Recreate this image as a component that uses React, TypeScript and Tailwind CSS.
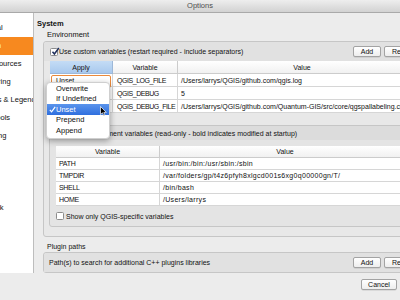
import React from "react";

const sidebarItems = [
  "General",
  "System",
  "Data Sources",
  "Rendering",
  "Canvas & Legend",
  "Map Tools",
  "Digitizing",
  "GDAL",
  "CRS",
  "Locale",
  "Network",
];

const customVars = [
  { apply: "Unset", name: "QGIS_LOG_FILE", value: "/Users/larrys/QGIS/github.com/qgis.log" },
  { apply: "Overwrite", name: "QGIS_DEBUG", value: "5" },
  {
    apply: "Overwrite",
    name: "QGIS_DEBUG_FILE",
    value: "/Users/larrys/QGIS/github.com/Quantum-GIS/src/core/qgspallabeling.cpp",
  },
];

const systemVars = [
  ["PATH", "/usr/bin:/bin:/usr/sbin:/sbin"],
  ["TMPDIR", "/var/folders/gp/t4z6pfyh8xlgcd001s6xg0q00000gn/T/"],
  ["SHELL", "/bin/bash"],
  ["HOME", "/Users/larrys"],
];

const applyOptions = ["Overwrite", "If Undefined", "Unset", "Prepend", "Append"];

const CheckBox = ({ checked }: { checked?: boolean }) => (
  <div className="relative w-[8px] h-[8px] shrink-0 bg-white border border-[#8c8c8c] rounded-[1.5px]">
    {checked && (
      <svg className="absolute left-[0px] top-[-2px]" width="9" height="9" viewBox="0 0 9 9">
        <path d="M1.5 4.8 L3.4 7 L7.8 1" fill="none" stroke="#1f2f5c" strokeWidth="1.5" />
      </svg>
    )}
  </div>
);

const MacButton = ({ label, w }: { label: string; w: string }) => (
  <div
    className={`${w} h-[11px] shrink-0 flex items-center justify-center overflow-hidden whitespace-nowrap bg-gradient-to-b from-white to-[#eeeeee] border border-[#a3a3a3] rounded-[2px] text-[7px] text-[#111] shadow-[0_0.5px_0.5px_rgba(0,0,0,0.15)]`}
  >
    {label}
  </div>
);

export default function App() {
  return (
    <div className="relative w-[400px] h-[300px] overflow-hidden bg-[#ececec] font-['Liberation_Sans',Arial,sans-serif] text-[7px] text-[#111] leading-none">
      {/* title bar */}
      <div className="h-[13px] flex items-center justify-center bg-gradient-to-b from-[#eeeeee] to-[#d2d2d2] border-b border-[#a9a9a9] text-[7.5px] text-[#4d4d4d]">
        Options
      </div>

      <div className="flex h-[260px]">
        {/* sidebar list, scrolled horizontally */}
        <div className="w-[34px] shrink-0 bg-white border-r border-[#bdbdbd] overflow-hidden pt-[6px] text-[7.5px]">
          {sidebarItems.map((item) => (
            <div
              key={item}
              className={`h-[18px] flex items-center whitespace-nowrap ${
                item === "System" ? "bg-[#f7891f] text-white" : "text-[#111]"
              }`}
            >
              <span className="ml-[-24px]">{item}</span>
            </div>
          ))}
        </div>

        {/* page */}
        <div className="flex-1 overflow-hidden pt-[6px]">
          <div className="h-[10px] flex items-center pl-[3px] font-bold text-[7.5px]">System</div>
          <div className="h-[12px] flex items-center pl-[13px] text-[7.5px]">Environment</div>

          <div className="ml-[9px] w-[389px] border border-[#c6c6c6] rounded-[3px] bg-[#e8e8e8]">
            <div className="h-[19px] flex items-center pl-[6px] pr-[5px] bg-[#e1e1e1] rounded-t-[3px]">
              <CheckBox checked />
              <span className="ml-[1px] whitespace-nowrap">
                Use custom variables (restart required - include separators)
              </span>
              <div className="ml-auto flex gap-[3px]">
                <MacButton label="Add" w="w-[28px]" />
                <MacButton label="Remove" w="w-[42px]" />
              </div>
            </div>

            <div className="pl-[5px] pr-[5px] pb-[9px]">
              {/* custom variables table */}
              <div className="ml-[1px] bg-white">
                <div className="grid grid-cols-[63px_65px_1fr] h-[13px]">
                  <div className="flex items-center justify-center bg-gradient-to-b from-[#c4dcf5] to-[#a9c9ee] border-r border-b border-[#9db8d8]">
                    Apply
                  </div>
                  <div className="flex items-center justify-center bg-gradient-to-b from-white to-[#f1f1f1] border-r border-b border-[#cccccc]">
                    Variable
                  </div>
                  <div className="flex items-center justify-center bg-gradient-to-b from-white to-[#f1f1f1] border-b border-[#cccccc]">
                    Value
                  </div>
                </div>
                {customVars.map((v, i) => (
                  <div key={v.name} className="grid grid-cols-[63px_65px_1fr] h-[13px]">
                    <div className="relative border-r border-b border-[#d6d6d6]">
                      {i === 0 ? (
                        <div className="absolute left-[1px] top-[1px] w-[60px] h-[13px] bg-white border-[1.5px] border-[#eb8a3c] rounded-[2px] pl-[4px] pt-[1px]">
                          {v.apply}
                        </div>
                      ) : (
                        <div className="h-full flex items-center pl-[4px]">{v.apply}</div>
                      )}
                    </div>
                    <div className="flex items-center pl-[4px] border-r border-b border-[#d6d6d6] whitespace-nowrap overflow-hidden tracking-[-0.45px]">
                      {v.name}
                    </div>
                    <div className="flex items-center pl-[3px] border-b border-[#d6d6d6] whitespace-nowrap overflow-hidden">
                      {v.value}
                    </div>
                  </div>
                ))}
              </div>

              {/* system environment group */}
              <div className="mt-[12px] border border-[#c6c6c6] rounded-[3px] bg-[#e4e4e4]">
                <div className="h-[14px] flex items-center pl-[9px] bg-[#dcdcdc] rounded-t-[3px] whitespace-nowrap">
                  System environment variables (read-only - bold indicates modified at startup)
                </div>
                <div className="pl-[6px] pr-[15px] pt-[6px] pb-[5px]">
                  <div className="bg-white">
                    <div className="grid grid-cols-[104px_1fr] h-[12px]">
                      <div className="flex items-center justify-center bg-gradient-to-b from-white to-[#f1f1f1] border-r border-b border-[#cccccc]">
                        Variable
                      </div>
                      <div className="flex items-center justify-center bg-gradient-to-b from-white to-[#f1f1f1] border-b border-[#cccccc]">
                        Value
                      </div>
                    </div>
                    {systemVars.map(([k, val]) => (
                      <div key={k} className="grid grid-cols-[104px_1fr] h-[12px]">
                        <div className="flex items-center pl-[3px] border-r border-b border-[#d6d6d6] tracking-[-0.3px]">
                          {k}
                        </div>
                        <div className="flex items-center pl-[3px] border-b border-[#d6d6d6] whitespace-nowrap overflow-hidden tracking-[0.3px]">
                          {val}
                        </div>
                      </div>
                    ))}
                  </div>
                  <div className="mt-[5px] h-[10px] flex items-center">
                    <CheckBox />
                    <span className="ml-[2px]">Show only QGIS-specific variables</span>
                  </div>
                </div>
              </div>
            </div>
          </div>

          <div className="h-[15px] pt-[5px] pl-[13px] leading-[10px]">Plugin paths</div>
          <div className="ml-[9px] w-[389px] border border-[#c6c6c6] rounded-[3px] bg-[#e8e8e8]">
            <div className="h-[19px] flex items-center pl-[5px] pr-[5px] bg-[#e1e1e1] rounded-t-[3px]">
              <span className="whitespace-nowrap">Path(s) to search for additional C++ plugins libraries</span>
              <div className="ml-auto flex gap-[3px]">
                <MacButton label="Add" w="w-[28px]" />
                <MacButton label="Remove" w="w-[42px]" />
              </div>
            </div>
          </div>
        </div>
      </div>

      {/* dialog buttons */}
      <div className="h-[27px] flex gap-[6px] pl-[361px] pt-[6px]">
        <MacButton label="Cancel" w="w-[36px]" />
        <MacButton label="OK" w="w-[36px]" />
      </div>

      {/* combo popup */}
      <div className="absolute left-[46px] top-[82px] w-[64px] pb-[2.5px] bg-white rounded-[4px] border border-[#cfcfcf] shadow-[0_2px_6px_rgba(0,0,0,0.35)] overflow-hidden text-[7.5px]">
        {applyOptions.map((opt) => (
          <div
            key={opt}
            className={`relative h-[10.5px] flex items-center pl-[9px] ${
              opt === "Unset" ? "bg-gradient-to-b from-[#5a94ec] to-[#2f6fde] text-white" : ""
            }`}
          >
            {opt === "Unset" && (
              <svg className="absolute left-[1.5px] top-[2px]" width="7" height="7" viewBox="0 0 7 7">
                <path d="M0.8 3.8 L2.6 5.8 L6.2 0.8" fill="none" stroke="white" strokeWidth="1.2" />
              </svg>
            )}
            {opt}
          </div>
        ))}
      </div>

      {/* mouse pointer */}
      <svg className="absolute left-[100px] top-[106px]" width="7" height="11" viewBox="0 0 7 11">
        <path d="M0.5 0.5 L0.5 8.5 L2.5 6.8 L3.8 9.8 L5 9.3 L3.8 6.4 L6.3 6.4 Z" fill="black" stroke="white" strokeWidth="0.7" />
      </svg>
    </div>
  );
}
